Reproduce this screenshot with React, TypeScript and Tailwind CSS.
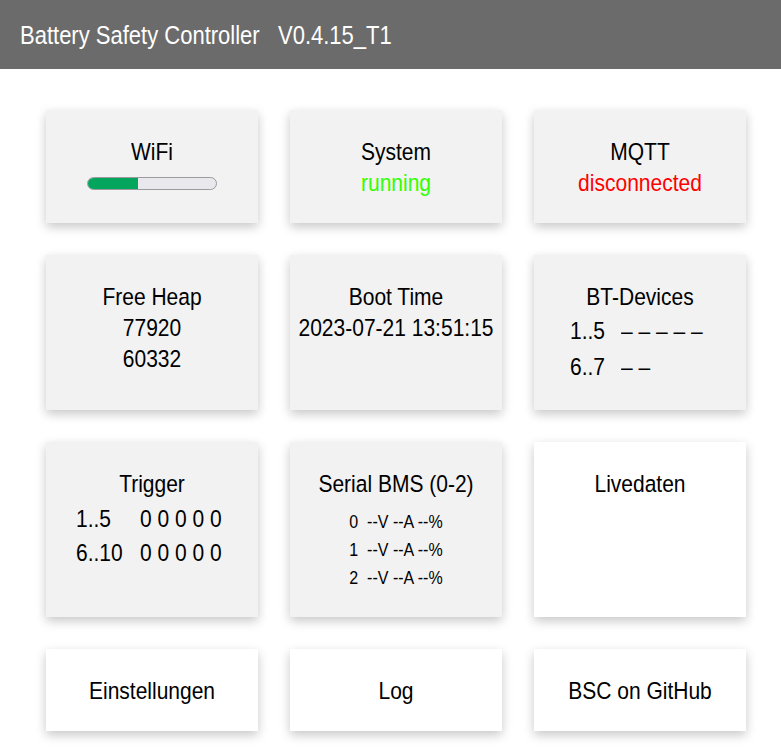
import React from "react";

const font = { fontFamily: "'Liberation Sans', Arial, sans-serif" };

function T({ children, className = "" }: { children?: React.ReactNode; className?: string }) {
  return <div className={`scale-y-[1.18] whitespace-pre ${className}`}>{children}</div>;
}

function Card({ children, white = false }: { children?: React.ReactNode; white?: boolean }) {
  return (
    <div
      className={`${white ? "bg-white" : "bg-[#f2f2f2]"} shadow-[0_4px_10px_rgba(0,0,0,0.22)] pt-[26px] flex flex-col items-center text-[21px] leading-[31px] text-black`}
    >
      {children}
    </div>
  );
}

export default function App() {
  return (
    <div className="min-h-[753px] bg-white" style={font}>
      <div className="h-[69px] bg-[#6b6b6b] flex items-center pl-[20px] pt-[2px] text-white text-[22px]">
        <T className="scale-y-[1.15]">{"Battery Safety Controller   V0.4.15_T1"}</T>
      </div>
      <div className="pl-[46px] pt-[41px] grid grid-cols-[212px_212px_212px] grid-rows-[113px_155px_175px_82px] gap-x-[32px] gap-y-[32px]">
        <Card>
          <T>WiFi</T>
          <div className="mt-[10px] w-[130px] h-[13px] rounded-full border border-[#9a9a9f] bg-[#e9e9ed] overflow-hidden">
            <div className="h-full w-[50px] bg-[#03a65c]" />
          </div>
        </Card>
        <Card>
          <T>System</T>
          <T className="text-[#33ff00]">running</T>
        </Card>
        <Card>
          <T>MQTT</T>
          <T className="text-[#ff0000]">disconnected</T>
        </Card>

        <Card>
          <T>Free Heap</T>
          <T>77920</T>
          <T>60332</T>
        </Card>
        <Card>
          <T>Boot Time</T>
          <T>2023-07-21 13:51:15</T>
        </Card>
        <Card>
          <T>BT-Devices</T>
          <div className="mt-[3px] flex flex-col self-start pl-[36px] gap-[5px]">
            <div className="flex">
              <T className="w-[51px]">1..5</T>
              <T>– – – – –</T>
            </div>
            <div className="flex">
              <T className="w-[51px]">6..7</T>
              <T>– –</T>
            </div>
          </div>
        </Card>

        <Card>
          <T>Trigger</T>
          <div className="mt-[4px] flex flex-col self-start pl-[30px] gap-[3px]">
            <div className="flex">
              <T className="w-[64px]">1..5</T>
              <T>0 0 0 0 0</T>
            </div>
            <div className="flex">
              <T className="w-[64px]">6..10</T>
              <T>0 0 0 0 0</T>
            </div>
          </div>
        </Card>
        <Card>
          <T>Serial BMS (0-2)</T>
          <div className="mt-[9px] flex flex-col items-center text-[16px] leading-[28px]">
            <T>{"0  --V --A --%"}</T>
            <T>{"1  --V --A --%"}</T>
            <T>{"2  --V --A --%"}</T>
          </div>
        </Card>
        <Card white>
          <T>Livedaten</T>
        </Card>

        <Card white>
          <T>Einstellungen</T>
        </Card>
        <Card white>
          <T>Log</T>
        </Card>
        <Card white>
          <T>BSC on GitHub</T>
        </Card>
      </div>
    </div>
  );
}
